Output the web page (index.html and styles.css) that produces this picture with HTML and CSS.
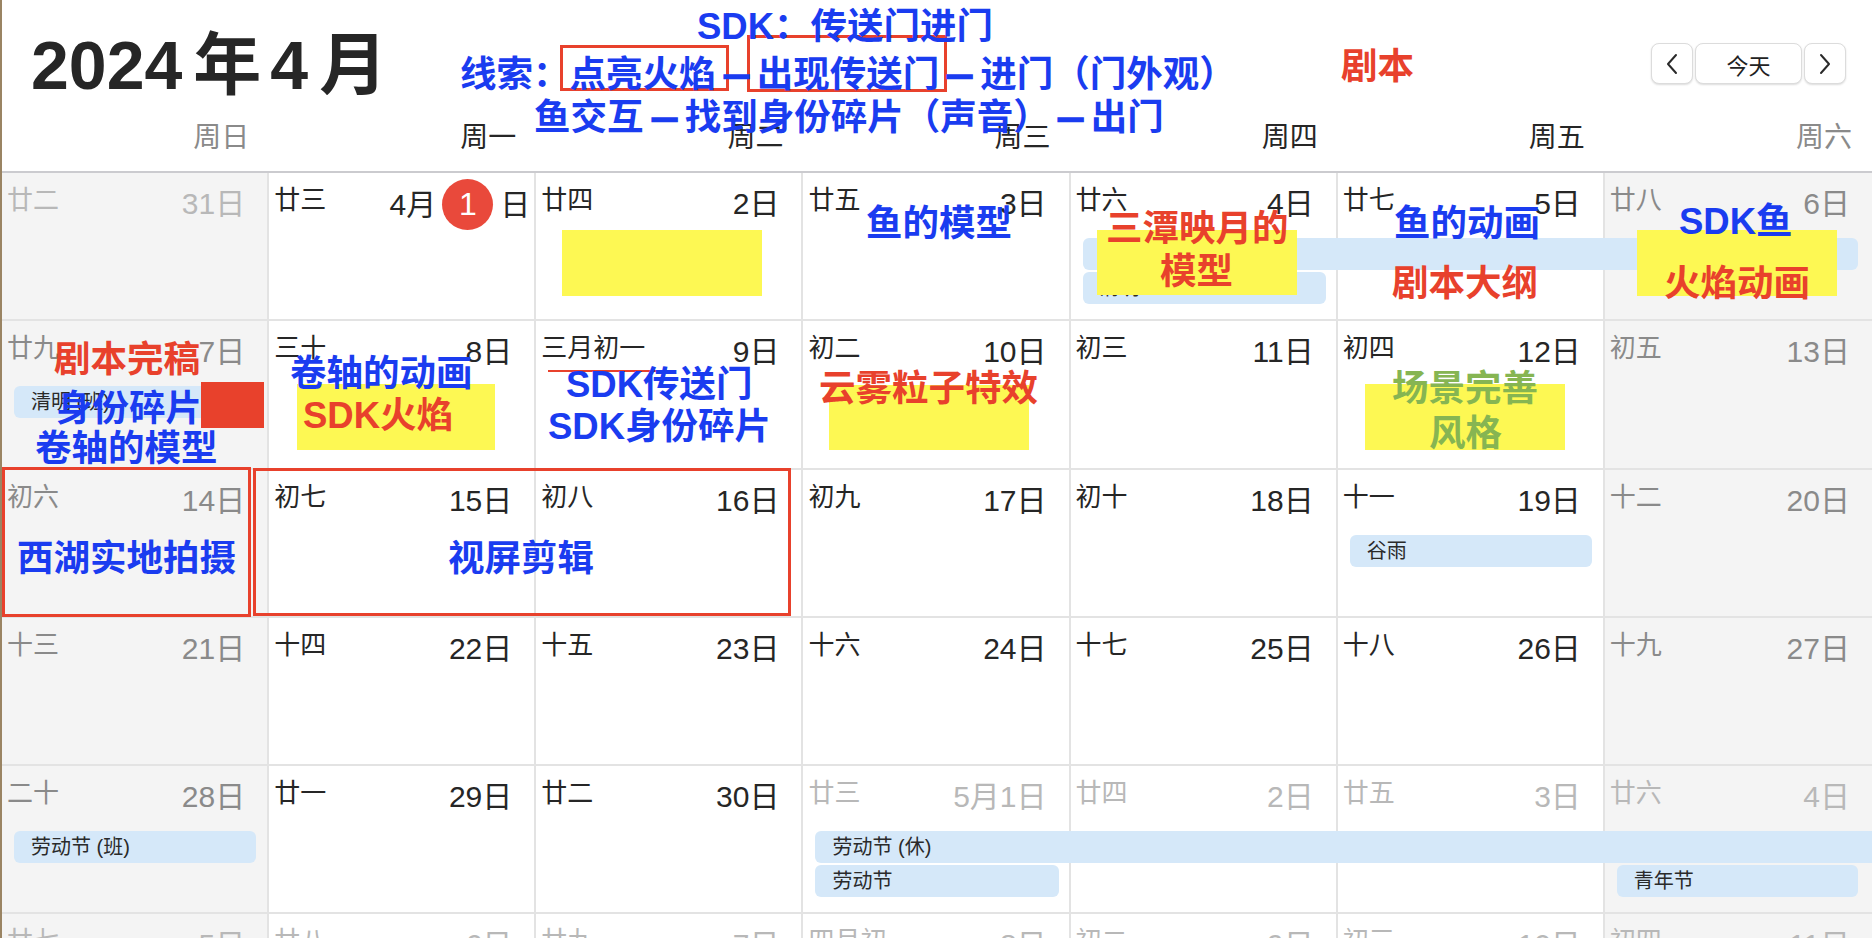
FILE: index.html
```html
<!DOCTYPE html>
<html lang="zh-CN">
<head>
<meta charset="utf-8">
<title>2024年4月</title>
<link rel="stylesheet" href="styles.css">
</head>
<body>
<div class="app">
  <header class="top">
    <h1 class="title">2024<span class="ym">年</span>4<span class="ym">月</span></h1>
    <div class="nav">
      <button class="btn arrow" aria-label="上一月"><svg width="14" height="22" viewBox="0 0 14 22"><polyline points="11,2 3,11 11,20"/></svg></button>
      <button class="btn today">今天</button>
      <button class="btn arrow" aria-label="下一月"><svg width="14" height="22" viewBox="0 0 14 22"><polyline points="3,2 11,11 3,20"/></svg></button>
    </div>
  </header>

  <div class="weekdays">
    <div class="wd we">周日</div>
    <div class="wd">周一</div>
    <div class="wd">周二</div>
    <div class="wd">周三</div>
    <div class="wd">周四</div>
    <div class="wd">周五</div>
    <div class="wd we">周六</div>
  </div>

  <div class="month">
    <div class="week">
      <div class="day we out"><span class="lunar">廿二</span><span class="num">31日</span></div>
      <div class="day today-cell"><span class="lunar">廿三</span><span class="num now">4月<span class="dot">1</span>日</span></div>
      <div class="day"><span class="lunar">廿四</span><span class="num">2日</span></div>
      <div class="day"><span class="lunar">廿五</span><span class="num">3日</span></div>
      <div class="day"><span class="lunar">廿六</span><span class="num">4日</span></div>
      <div class="day"><span class="lunar">廿七</span><span class="num">5日</span></div>
      <div class="day we"><span class="lunar">廿八</span><span class="num">6日</span></div>
      <div class="ev slot1 thu-sat">清明节 (休)</div>
      <div class="ev slot2 thu">清明</div>
    </div>
    <div class="week">
      <div class="day we"><span class="lunar">廿九</span><span class="num">7日</span></div>
      <div class="day"><span class="lunar">三十</span><span class="num">8日</span></div>
      <div class="day"><span class="lunar">三月初一</span><span class="num">9日</span></div>
      <div class="day"><span class="lunar">初二</span><span class="num">10日</span></div>
      <div class="day"><span class="lunar">初三</span><span class="num">11日</span></div>
      <div class="day"><span class="lunar">初四</span><span class="num">12日</span></div>
      <div class="day we"><span class="lunar">初五</span><span class="num">13日</span></div>
      <div class="ev slot1 sun">清明 (班)</div>
    </div>
    <div class="week">
      <div class="day we"><span class="lunar">初六</span><span class="num">14日</span></div>
      <div class="day"><span class="lunar">初七</span><span class="num">15日</span></div>
      <div class="day"><span class="lunar">初八</span><span class="num">16日</span></div>
      <div class="day"><span class="lunar">初九</span><span class="num">17日</span></div>
      <div class="day"><span class="lunar">初十</span><span class="num">18日</span></div>
      <div class="day"><span class="lunar">十一</span><span class="num">19日</span></div>
      <div class="day we"><span class="lunar">十二</span><span class="num">20日</span></div>
      <div class="ev slot1 fri">谷雨</div>
    </div>
    <div class="week">
      <div class="day we"><span class="lunar">十三</span><span class="num">21日</span></div>
      <div class="day"><span class="lunar">十四</span><span class="num">22日</span></div>
      <div class="day"><span class="lunar">十五</span><span class="num">23日</span></div>
      <div class="day"><span class="lunar">十六</span><span class="num">24日</span></div>
      <div class="day"><span class="lunar">十七</span><span class="num">25日</span></div>
      <div class="day"><span class="lunar">十八</span><span class="num">26日</span></div>
      <div class="day we"><span class="lunar">十九</span><span class="num">27日</span></div>
    </div>
    <div class="week">
      <div class="day we"><span class="lunar">二十</span><span class="num">28日</span></div>
      <div class="day"><span class="lunar">廿一</span><span class="num">29日</span></div>
      <div class="day"><span class="lunar">廿二</span><span class="num">30日</span></div>
      <div class="day out"><span class="lunar">廿三</span><span class="num">5月1日</span></div>
      <div class="day out"><span class="lunar">廿四</span><span class="num">2日</span></div>
      <div class="day out"><span class="lunar">廿五</span><span class="num">3日</span></div>
      <div class="day we out"><span class="lunar">廿六</span><span class="num">4日</span></div>
      <div class="ev slot1 sun">劳动节 (班)</div>
      <div class="ev slot1 wed-on">劳动节 (休)</div>
      <div class="ev slot2 wed">劳动节</div>
      <div class="ev slot2 sat">青年节</div>
    </div>
    <div class="week">
      <div class="day we out"><span class="lunar">廿七</span><span class="num">5日</span></div>
      <div class="day out"><span class="lunar">廿八</span><span class="num">6日</span></div>
      <div class="day out"><span class="lunar">廿九</span><span class="num">7日</span></div>
      <div class="day out"><span class="lunar">四月初一</span><span class="num">8日</span></div>
      <div class="day out"><span class="lunar">初二</span><span class="num">9日</span></div>
      <div class="day out"><span class="lunar">初三</span><span class="num">10日</span></div>
      <div class="day we out"><span class="lunar">初四</span><span class="num">11日</span></div>
    </div>
  </div>

  <div class="notes">
    <div class="hl hl-a"></div>
    <div class="hl hl-b"></div>
    <div class="hl hl-c"></div>
    <div class="hl hl-d"></div>
    <div class="hl hl-e"></div>
    <div class="hl hl-f"></div>
    <div class="red-block"></div>
    <div class="uline"></div>
    <div class="frame fr-1"></div>
    <div class="frame fr-2"></div>
    <div class="frame fr-3"></div>
    <div class="frame fr-4"></div>

    <div class="note blue t-sdk">SDK：传送门进门</div>
    <div class="note blue t-clue">线索：点亮火焰<span class="dash">—</span>出现传送门<span class="dash">—</span>进门（门外观）</div>
    <div class="note blue t-fish">鱼交互<span class="dash">—</span>找到身份碎片（声音）<span class="dash">—</span>出门</div>
    <div class="note red t-script">剧本</div>

    <div class="note blue t-fishmodel">鱼的模型</div>
    <div class="note red t-santan">三潭映月的</div>
    <div class="note red t-model">模型</div>
    <div class="note blue t-fishanim">鱼的动画</div>
    <div class="note red t-outline">剧本大纲</div>
    <div class="note blue t-sdkfish">SDK鱼</div>
    <div class="note red t-fireanim">火焰动画</div>

    <div class="note red t-final">剧本完稿</div>
    <div class="note blue t-shard">身份碎片</div>
    <div class="note blue t-scroll">卷轴的模型</div>
    <div class="note blue t-scrollanim">卷轴的动画</div>
    <div class="note red t-sdkfire">SDK火焰</div>
    <div class="note blue t-sdkportal">SDK传送门</div>
    <div class="note blue t-sdkshard">SDK身份碎片</div>
    <div class="note red t-cloud">云雾粒子特效</div>
    <div class="note green t-scene">场景完善</div>
    <div class="note green t-style">风格</div>

    <div class="note blue t-xihu">西湖实地拍摄</div>
    <div class="note blue t-edit">视屏剪辑</div>
  </div>
</div>
</body>
</html>
```

FILE: styles.css
```css
* {
  box-sizing: border-box;
  margin: 0;
  padding: 0;
}

html, body {
  width: 1872px;
  height: 938px;
  overflow: hidden;
  background: #ffffff;
}

body {
  font-family: "Liberation Sans", "Noto Sans CJK SC", sans-serif;
  color: #262626;
}

.app {
  position: relative;
  width: 1872px;
  height: 938px;
  overflow: hidden;
  border-left: 2px solid #9a8463;
}

/* ---------- header ---------- */
.top {
  height: 110px;
  display: flex;
  justify-content: space-between;
  align-items: flex-start;
  padding: 0 26px 0 29px;
}

.title {
  margin-top: 31px;
  font-size: 68px;
  line-height: 68px;
  font-weight: 700;
  color: #262626;
  white-space: nowrap;
}

.title .ym {
  margin: 0 9px 0 11px;
}

.nav {
  margin-top: 43px;
  display: flex;
  gap: 2px;
}

.btn {
  height: 41px;
  background: #ffffff;
  border: 1px solid #dcdcdc;
  border-radius: 8px;
  box-shadow: 0 1px 2px rgba(0, 0, 0, 0.14);
  font-family: "Liberation Sans", "Noto Sans CJK SC", sans-serif;
  color: #222222;
  display: flex;
  align-items: center;
  justify-content: center;
}

.btn.arrow {
  width: 42px;
}

.btn.arrow polyline {
  fill: none;
  stroke: #2a2a2a;
  stroke-width: 2;
  stroke-linecap: round;
  stroke-linejoin: round;
}

.btn.today {
  width: 107px;
  font-size: 22px;
}

/* ---------- weekday header ---------- */
.weekdays {
  height: 61px;
  display: grid;
  grid-template-columns: repeat(7, 1fr);
}

.wd {
  padding: 14px 20px 0 0;
  text-align: right;
  font-size: 28px;
  line-height: 1;
  color: #262626;
}

.wd.we {
  color: #8a8a8a;
}

/* ---------- month grid ---------- */
.month {
  border-top: 2px solid #cbcbcf;
}

.week {
  height: 148.3px;
  display: grid;
  grid-template-columns: repeat(7, 1fr);
  grid-template-rows: 65px 34px 32px 1fr;
  border-bottom: 2px solid #e3e3e3;
}

.day {
  grid-row: 1 / -1;
  display: flex;
  justify-content: space-between;
  align-items: flex-start;
  padding: 14px 22px 0 5px;
  border-right: 2px solid #e3e3e3;
  background: #ffffff;
  color: #262626;
  min-width: 0;
}

.day:nth-child(1) { grid-column: 1; }
.day:nth-child(2) { grid-column: 2; }
.day:nth-child(3) { grid-column: 3; }
.day:nth-child(4) { grid-column: 4; }
.day:nth-child(5) { grid-column: 5; }
.day:nth-child(6) { grid-column: 6; }
.day:nth-child(7) { grid-column: 7; border-right: none; }

.day.we {
  background: #f4f4f4;
  color: #8a8a8a;
}

.day.out {
  color: #b8b8b8;
}

.lunar {
  font-size: 26px;
  line-height: 1;
  white-space: nowrap;
}

.num {
  margin-top: 2px;
  font-size: 30px;
  line-height: 30px;
  white-space: nowrap;
}

.today-cell {
  padding-right: 4px;
}

.num.now {
  display: flex;
  align-items: center;
  margin-top: -8px;
}

.dot {
  width: 51px;
  height: 51px;
  margin: 0 7px 0 6px;
  border-radius: 50%;
  background: #e9493b;
  color: #ffffff;
  font-size: 32px;
  line-height: 51px;
  text-align: center;
}

/* ---------- events ---------- */
.ev {
  height: 32px;
  align-self: start;
  margin: 0 13px 0 12px;
  padding-left: 17px;
  background: #d5e8f9;
  border-radius: 6px;
  font-size: 20px;
  line-height: 32px;
  color: #2a2a2a;
  white-space: nowrap;
  overflow: hidden;
}

.slot1 { grid-row: 2; }
.slot2 { grid-row: 3; }

.sun { grid-column: 1; }
.wed { grid-column: 4; margin-right: 12px; }
.thu { grid-column: 5; margin-right: 12px; }
.fri { grid-column: 6; }
.sat { grid-column: 7; margin-right: 14px; }
.thu-sat { grid-column: 5 / 8; margin-right: 14px; }
.wed-on {
  grid-column: 4 / 8;
  margin-right: 0;
  border-radius: 6px 0 0 6px;
}

/* ---------- annotation overlay ---------- */
.notes {
  position: absolute;
  inset: 0;
  pointer-events: none;
}

.hl {
  position: absolute;
  background: #fdf853;
}

.hl-a { left: 560px; top: 230px; width: 200px; height: 66px; }
.hl-b { left: 1095px; top: 230px; width: 200px; height: 65px; }
.hl-c { left: 1635px; top: 230px; width: 200px; height: 66px; }
.hl-d { left: 295px; top: 384px; width: 198px; height: 66px; }
.hl-e { left: 827px; top: 385px; width: 200px; height: 65px; }
.hl-f { left: 1363px; top: 384px; width: 200px; height: 66px; }

.red-block {
  position: absolute;
  left: 199px;
  top: 382px;
  width: 63px;
  height: 46px;
  background: #e8412c;
}

.uline {
  position: absolute;
  left: 546px;
  top: 370px;
  width: 111px;
  height: 2px;
  background: #e8412c;
}

.frame {
  position: absolute;
  border: 3px solid #e8412c;
}

.fr-1 { left: 558px; top: 45px; width: 169px; height: 46px; }
.fr-2 { left: 745px; top: 35px; width: 200px; height: 57px; }
.fr-3 { left: 0; top: 467px; width: 249px; height: 150px; }
.fr-4 { left: 251px; top: 468px; width: 538px; height: 148px; }

.note {
  position: absolute;
  font-family: "Liberation Sans", "Noto Sans CJK SC", sans-serif;
  font-weight: 700;
  font-size: 36.5px;
  line-height: 1;
  white-space: nowrap;
}

.note .dash {
  display: inline-block;
  margin: 0 4px;
  font-family: "Noto Sans CJK SC", sans-serif;
  -webkit-text-stroke: 1.6px currentColor;
  transform: scaleX(0.85);
}

.blue { color: #1a3cf0; }
.red { color: #e8412c; }
.green { color: #86b552; }

.t-sdk { left: 695px; top: 9px; }
.t-clue { left: 458px; top: 54px; }
.t-fish { left: 532px; top: 97px; }
.t-script { left: 1339px; top: 49px; }

.t-fishmodel { left: 864px; top: 206px; }
.t-santan { left: 1104px; top: 211px; }
.t-model { left: 1158px; top: 254px; }
.t-fishanim { left: 1392px; top: 206px; }
.t-outline { left: 1390px; top: 266px; }
.t-sdkfish { left: 1677px; top: 204px; }
.t-fireanim { left: 1662px; top: 266px; }

.t-final { left: 52px; top: 342px; }
.t-shard { left: 54px; top: 391px; }
.t-scroll { left: 33px; top: 431px; }
.t-scrollanim { left: 288px; top: 356px; }
.t-sdkfire { left: 301px; top: 398px; }
.t-sdkportal { left: 564px; top: 367px; }
.t-sdkshard { left: 546px; top: 409px; }
.t-cloud { left: 817px; top: 371px; }
.t-scene { left: 1390px; top: 371px; }
.t-style { left: 1427px; top: 416px; }

.t-xihu { left: 15px; top: 541px; }
.t-edit { left: 446px; top: 541px; }
```
